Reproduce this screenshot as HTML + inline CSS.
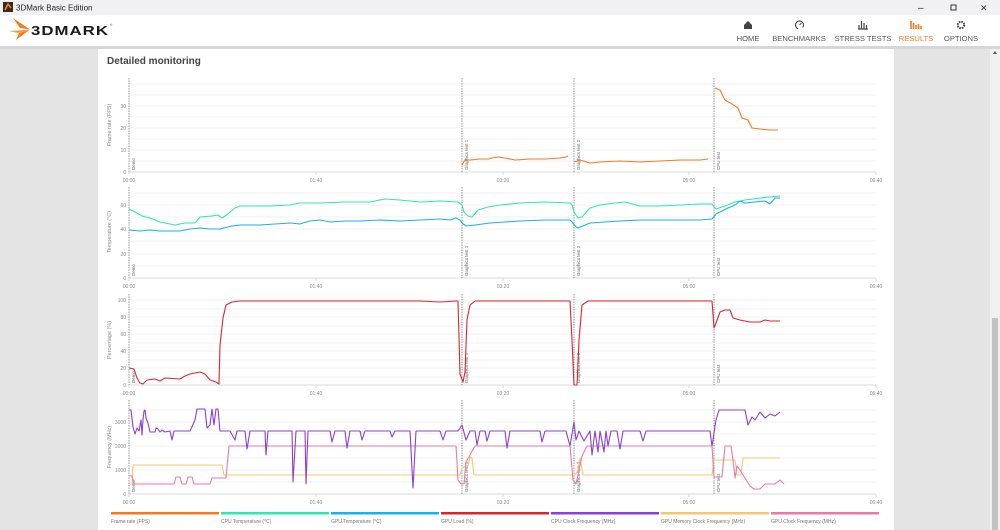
<!DOCTYPE html>
<html><head><meta charset="utf-8"><style>
body{margin:0;width:1000px;height:530px;overflow:hidden;background:#e4e4e4;font-family:"Liberation Sans",sans-serif;}
svg{display:block}
</style></head><body>
<svg width="1000" height="530" xmlns="http://www.w3.org/2000/svg" font-family="Liberation Sans, sans-serif">
<rect x="0" y="0" width="1000" height="15" fill="#f1f1f4"/>
<rect x="3" y="2" width="10" height="10" fill="#3a2a1a"/>
<path d="M5 10 L8 4 L11 8" stroke="#f08a24" stroke-width="1.5" fill="none"/>
<text x="16" y="10.5" font-size="8" fill="#222">3DMark Basic Edition</text>
<text x="918" y="11" font-size="10" fill="#333">–</text>
<rect x="951" y="5" width="5" height="5" fill="none" stroke="#333" stroke-width="1"/>
<text x="980" y="11" font-size="9" fill="#333">✕</text>
<rect x="0" y="15" width="1000" height="31" fill="#fff"/>
<rect x="0" y="46" width="1000" height="3" fill="#d6d6d6"/>
<!-- logo -->
<path d="M13 18 L30 29.5 L20 28 Z" fill="#f47a20"/>
<path d="M9 31 L30 29.5 L18 33 Z" fill="#f7a040"/>
<path d="M30 29.5 L16 40 L19 33 Z" fill="#f47a20"/>
<text x="31" y="35" font-size="13" font-weight="bold" fill="#1a1a1a" letter-spacing="0.8" textLength="78" lengthAdjust="spacingAndGlyphs">3DMARK</text>
<text x="110" y="26" font-size="3" fill="#333">®</text>
<!-- nav -->
<g font-size="7.6" fill="#555" text-anchor="middle">
<text x="748" y="41">HOME</text>
<text x="799" y="41">BENCHMARKS</text>
<text x="863" y="41">STRESS TESTS</text>
<text x="916" y="41" fill="#f47a20">RESULTS</text>
<text x="961" y="41">OPTIONS</text>
</g>
<path d="M744 25 L748 21 L752 25 V29 H744 Z" fill="#444"/>
<circle cx="799.5" cy="25" r="4" fill="none" stroke="#444" stroke-width="1.1" stroke-dasharray="20 6" transform="rotate(110 799.5 25)"/>
<path d="M799.5 25 L801.5 23" stroke="#444" stroke-width="1"/>
<path d="M858 29 H868 M859 29 V25 M861.5 29 V21 M864 29 V23 M866.5 29 V25" stroke="#444" stroke-width="1.2"/>
<path d="M911 29 V21 M913.5 29 V23 M916 29 V25 M918.5 29 V24 M921 29 V26" stroke="#f47a20" stroke-width="1.6"/>
<circle cx="961" cy="25" r="3.2" fill="none" stroke="#444" stroke-width="2" stroke-dasharray="1.6 0.9"/>
<circle cx="961" cy="25" r="1.2" fill="#fff"/>
<!-- scrollbar -->
<rect x="990" y="49" width="10" height="481" fill="#f0f0f0"/>
<rect x="992" y="318" width="6" height="212" fill="#c2c2c2"/>
<path d="M993 54 L995 51 L997 54 Z" fill="#555"/>
<!-- panel -->
<rect x="98" y="49" width="796" height="481" fill="#fff"/>
<text x="107" y="64" font-size="10" font-weight="bold" fill="#444">Detailed monitoring</text>

<g font-size="5" fill="#888">
<g stroke="#eeeeee" stroke-width="0.7">
<path d="M129 84H876M129 95H876M129 106H876M129 117H876M129 128H876M129 139H876M129 150H876M129 161H876"/>
<path d="M129 193H876M129 205H876M129 217H876M129 229H876M129 241H876M129 254H876M129 266H876"/>
<path d="M129 300H876M129 309H876M129 317H876M129 326H876M129 334H876M129 343H876M129 351H876M129 360H876M129 368H876M129 377H876"/>
<path d="M129 410H876M129 422H876M129 434H876M129 446H876M129 458H876M129 470H876M129 482H876"/>
</g>
<g stroke="#ccc" stroke-width="0.7">
<path d="M129 172H876M129 278H876M129 385H876M129 494H876"/>
<path d="M129 172v3M316 172v3M503 172v3M689 172v3M876 172v3M129 278v3M316 278v3M503 278v3M689 278v3M876 278v3M129 385v3M316 385v3M503 385v3M689 385v3M876 385v3M129 494v3M316 494v3M503 494v3M689 494v3M876 494v3"/>
</g>
<g stroke="#555" stroke-width="0.6" stroke-dasharray="1.5 1">
<path d="M129 78V172M462 78V172M574 78V172M714 78V172"/>
<path d="M129 187V278M462 187V278M574 187V278M714 187V278"/>
<path d="M129 294V385M462 294V385M574 294V385M714 294V385"/>
<path d="M129 400V494M462 400V494M574 400V494M714 400V494"/>
</g>
<g text-anchor="middle">
<text x="129" y="182">00:00</text><text x="316" y="182">01:40</text><text x="503" y="182">03:20</text><text x="689" y="182">05:00</text><text x="876" y="182">06:40</text>
<text x="129" y="288">00:00</text><text x="316" y="288">01:40</text><text x="503" y="288">03:20</text><text x="689" y="288">05:00</text><text x="876" y="288">06:40</text>
<text x="129" y="395">00:00</text><text x="316" y="395">01:40</text><text x="503" y="395">03:20</text><text x="689" y="395">05:00</text><text x="876" y="395">06:40</text>
<text x="129" y="504">00:00</text><text x="316" y="504">01:40</text><text x="503" y="504">03:20</text><text x="689" y="504">05:00</text><text x="876" y="504">06:40</text>
</g>
<g text-anchor="end">
<text x="126" y="174">0</text><text x="126" y="152">10</text><text x="126" y="130">20</text><text x="126" y="108">30</text>
<text x="126" y="280">0</text><text x="126" y="256">20</text><text x="126" y="231">40</text><text x="126" y="207">60</text>
<text x="126" y="387">0</text><text x="126" y="370">20</text><text x="126" y="353">40</text><text x="126" y="336">60</text><text x="126" y="319">80</text><text x="126" y="302">100</text>
<text x="126" y="496">0</text><text x="126" y="472">1000</text><text x="126" y="448">2000</text><text x="126" y="424">3000</text>
</g>
<g font-size="5.5">
<text transform="translate(111 125) rotate(-90)" text-anchor="middle">Frame rate (FPS)</text>
<text transform="translate(111 232) rotate(-90)" text-anchor="middle">Temperature (°C)</text>
<text transform="translate(111 340) rotate(-90)" text-anchor="middle">Percentage (%)</text>
<text transform="translate(111 447) rotate(-90)" text-anchor="middle">Frequency (MHz)</text>
</g>
<g fill="#666" font-size="4.5">
<text transform="translate(135 170) rotate(-90)">Demo</text><text transform="translate(468 170) rotate(-90)">Graphics test 1</text><text transform="translate(580 170) rotate(-90)">Graphics test 2</text><text transform="translate(720 170) rotate(-90)">CPU test</text>
<text transform="translate(135 276) rotate(-90)">Demo</text><text transform="translate(468 276) rotate(-90)">Graphics test 1</text><text transform="translate(580 276) rotate(-90)">Graphics test 2</text><text transform="translate(720 276) rotate(-90)">CPU test</text>
<text transform="translate(135 383) rotate(-90)">Demo</text><text transform="translate(468 383) rotate(-90)">Graphics test 1</text><text transform="translate(580 383) rotate(-90)">Graphics test 2</text><text transform="translate(720 383) rotate(-90)">CPU test</text>
<text transform="translate(135 492) rotate(-90)">Demo</text><text transform="translate(468 492) rotate(-90)">Graphics test 1</text><text transform="translate(580 492) rotate(-90)">Graphics test 2</text><text transform="translate(720 492) rotate(-90)">CPU test</text>
</g>
</g>

<g fill="none" stroke-width="1.1" stroke-linejoin="round">
<polyline stroke="#f47a20" points="462,165 465,160 470,160 480,159 488,159 492,158 498,157 505,158 515,160 530,159 545,159 560,158 566,157 568,156"/>
<polyline stroke="#f47a20" points="574,162 580,160 590,163 600,162 620,161 640,162 660,161 680,160 700,160 708,159"/>
<polyline stroke="#f47a20" points="715,88 720,90 725,100 732,104 738,108 742,118 748,120 752,128 760,129 770,130 778,130"/>
<polyline stroke="#2ee8b0" points="129,209 135,212 142,216 150,218 160,222 175,225 185,223 195,223 200,217 212,216 218,215 222,218 228,214 235,208 240,206 250,206 270,206 290,205 300,203 320,203 345,202 370,202 385,199 400,200 420,202 440,201 458,202 462,205 464,212 468,216 472,217 478,210 488,207 500,205 520,203 545,202 570,203 572,205 574,212 578,218 582,217 590,208 600,205 615,203 625,202 640,206 660,206 680,205 700,204 712,204 714,207 716,209 725,206 735,202 745,200 760,198 780,196"/>
<polyline stroke="#1ab0f0" points="129,230 140,231 150,230 160,231 180,231 190,229 200,228 210,229 220,229 232,226 240,225 260,225 290,223 300,224 310,221 320,220 330,222 345,221 360,221 380,220 400,221 420,220 440,219 450,220 456,218 460,220 462,223 466,226 475,225 490,223 505,222 520,221 545,220 570,220 572,222 575,226 578,228 590,223 605,222 620,221 640,220 660,220 680,220 700,220 712,219 716,214 722,211 728,208 735,205 740,201 745,203 755,202 765,201 770,204 775,198 780,198"/>
<polyline stroke="#d9262e" points="129,368 134,369 137,378 140,383 143,384 147,380 155,379 160,381 165,378 180,379 185,376 190,374 195,373 200,372 205,374 210,380 216,382 219,384 220,345 223,318 226,305 232,302 240,301 300,301 360,301 420,301 440,302 456,301 458,301 460,374 463,382 465,372 467,320 470,305 475,301 570,301 572,340 574,385 577,385 579,340 582,305 588,301 712,301 714,328 716,323 720,312 725,310 730,310 733,318 740,320 750,322 760,322 765,320 770,321 780,321"/>
<polyline stroke="#f0c870" points="132,485 133,465 222,465 224,475 460,475 462,468 468,465 470,457 472,458 474,475 575,475 578,470 580,458 583,475 712,475 714,460 735,460 737,475 741,475 743,458 780,458"/>
<polyline stroke="#e87aa8" points="129,476 132,476 134,484 174,484 176,477 180,477 182,484 186,484 188,477 192,477 194,484 210,484 212,478 226,478 229,446 456,446 458,480 461,484 464,484 466,462 470,455 475,446 570,446 573,480 576,484 579,470 582,456 587,446 712,446 714,477 722,477 725,446 731,446 733,460 735,478 737,466 740,470 745,478 750,486 754,489 760,489 765,484 775,484 780,480 784,484"/>
<polyline stroke="#8b3fd6" points="129,410 131,410 133,427 135,434 137,428 139,431 141,420 142,435 143,420 144,411 145,410 146,418 148,423 150,432 152,432 155,432 156,428 158,429 160,432 162,430 165,432 170,431 172,440 174,431 185,431 190,431 195,420 197,409 205,409 207,428 210,425 212,409 214,425 216,409 218,409 220,431 230,431 235,440 237,431 245,431 247,449 250,431 265,431 266,455 268,431 292,431 293,482 296,431 305,431 306,484 308,431 330,431 332,442 335,431 345,431 347,448 350,431 360,431 362,440 365,431 390,431 392,437 395,431 410,431 413,488 416,431 440,431 443,440 446,431 458,431 462,425 466,440 470,431 475,431 477,445 480,431 485,431 487,441 490,431 505,431 507,448 510,431 540,431 542,442 545,431 566,431 570,446 574,422 576,440 579,431 584,441 590,431 592,455 595,431 598,452 600,431 604,452 606,431 608,446 611,431 617,431 620,449 623,431 640,431 643,441 646,431 710,431 712,446 716,420 719,410 745,410 748,425 752,417 755,420 760,412 765,418 770,414 775,416 780,412"/>
</g>

<g>
<rect x="111" y="512" width="108" height="2.5" fill="#f47a20"/>
<rect x="221" y="512" width="108" height="2.5" fill="#2ee8b0"/>
<rect x="331" y="512" width="108" height="2.5" fill="#1ab0f0"/>
<rect x="441" y="512" width="108" height="2.5" fill="#d9262e"/>
<rect x="551" y="512" width="108" height="2.5" fill="#8b3fd6"/>
<rect x="661" y="512" width="108" height="2.5" fill="#f0c870"/>
<rect x="771" y="512" width="108" height="2.5" fill="#e87aa8"/>
</g>
<g font-size="5" fill="#777">
<text x="111" y="523">Frame rate (FPS)</text>
<text x="221" y="523">CPU Temperature (°C)</text>
<text x="331" y="523">GPU Temperature (°C)</text>
<text x="441" y="523">GPU Load (%)</text>
<text x="551" y="523">CPU Clock Frequency (MHz)</text>
<text x="661" y="523">GPU Memory Clock Frequency (MHz)</text>
<text x="771" y="523">GPU Clock Frequency (MHz)</text>
</g>
</svg>
</body></html>
